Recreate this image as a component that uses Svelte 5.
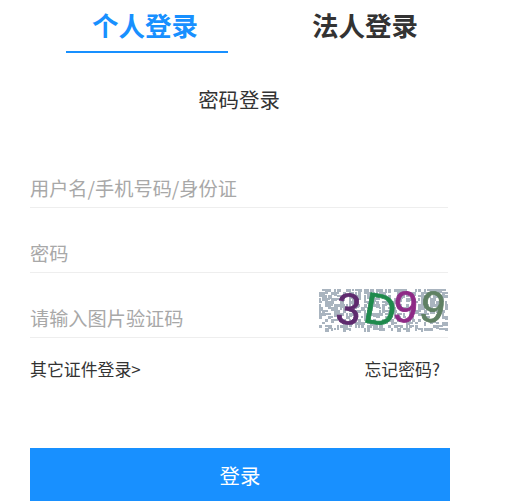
<script>
	let account = $state("");
	let password = $state("");
	let code = $state("");
	let active = $state("person");

	const tabs = [
		{ id: "person", label: "个人登录" },
		{ id: "company", label: "法人登录" },
	];

	const digits = [
		{ ch: "3", x: 17, y: 35, color: "#5e2a6e", rotate: 6 },
		{ ch: "D", x: 45, y: 35, color: "#1f8a4c", rotate: 10 },
		{ ch: "9", x: 74, y: 33, color: "#8e2a86", rotate: 6 },
		{ ch: "9", x: 101, y: 33, color: "#5f8063", rotate: 10 },
	];

	// speckled background of the captcha, same every load
	let seed = 11;
	function rand() {
		seed = (seed * 16807) % 2147483647;
		return seed / 2147483647;
	}
	const noise = [];
	for (let y = 0; y < 42; y += 3) {
		for (let x = 0; x < 129; x += 3) {
			if (rand() > 0.36) {
				noise.push({
					x,
					y,
					w: Math.min(2 + Math.round(rand() * 2), 129 - x),
					h: Math.min(2 + Math.round(rand() * 2), 43 - y),
				});
			}
		}
	}
</script>

<div class="login">
	<nav class="tabs">
		{#each tabs as tab}
			<button class="tab" class:active={active === tab.id} onclick={() => (active = tab.id)}>
				{tab.label}
			</button>
		{/each}
	</nav>

	<h2 class="title">密码登录</h2>

	<form class="form" onsubmit={(e) => e.preventDefault()}>
		<div class="field">
			<input bind:value={account} placeholder="用户名/手机号码/身份证" />
		</div>
		<div class="field">
			<input type="password" bind:value={password} placeholder="密码" />
		</div>
		<div class="field">
			<input bind:value={code} placeholder="请输入图片验证码" />
			<svg class="captcha" width="129" height="43" viewBox="0 0 129 43">
				<rect width="129" height="43" fill="#fff" />
				{#each noise as n}
					<rect x={n.x} y={n.y} width={n.w} height={n.h} fill="#a9b4bf" />
				{/each}
				{#each digits as d}
					<text
						x={d.x}
						y={d.y}
						fill={d.color}
						stroke={d.color}
						transform="rotate({d.rotate} {d.x + 12} {d.y - 12})"
						class="digit">{d.ch}</text
					>
				{/each}
			</svg>
		</div>

		<div class="links">
			<a href="#other">其它证件登录&gt;</a>
			<a href="#forgot" class="forgot">忘记密码?</a>
		</div>

		<button class="submit" type="submit">登录</button>
	</form>
</div>

<style>
	:global(body) {
		background: #fff;
		overflow: hidden;
	}

	.login {
		width: 505px;
		height: 502px;
		box-sizing: border-box;
		padding-left: 30px;
		font-family: "Noto Sans CJK SC", "Liberation Sans", sans-serif;
		color: #333;
	}

	.tabs {
		display: flex;
		gap: 58px;
		margin-left: 36px;
	}

	.tab {
		width: 162px;
		height: 53px;
		padding: 0 4px 2px 0;
		border: 0;
		border-bottom: 2px solid transparent;
		background: none;
		font: inherit;
		font-size: 26.5px;
		line-height: 49px;
		font-weight: 700;
		color: #333;
	}

	.tab.active {
		color: #1890ff;
		border-bottom-color: #1890ff;
	}

	.title {
		margin: 31px 0 0;
		width: 418px;
		font-size: 20.4px;
		line-height: 30px;
		font-weight: 400;
		text-align: center;
	}

	.form {
		display: flex;
		flex-direction: column;
		margin-top: 30px;
	}

	.field {
		display: flex;
		align-items: flex-end;
		width: 418px;
		height: 64px;
		box-sizing: border-box;
		border-bottom: 1px solid #eee;
		margin-bottom: 1px;
	}

	.field input {
		flex: 1;
		min-width: 0;
		height: 36px;
		padding: 0 0 1px;
		border: 0;
		outline: 0;
		background: none;
		font: inherit;
		font-size: 19.2px;
		color: #333;
	}

	.field input::placeholder {
		color: #a8a8a8;
		opacity: 1;
	}

	.captcha {
		display: block;
		flex: none;
		margin-bottom: 5px;
		overflow: visible;
		filter: blur(0.5px);
	}

	.digit {
		font-family: "Liberation Sans", sans-serif;
		font-size: 44px;
		stroke-width: 0.8px;
	}

	.links {
		display: flex;
		justify-content: space-between;
		width: 410px;
		margin-top: 17px;
		font-size: 16.9px;
		line-height: 26px;
	}

	.links a {
		color: #333;
		text-decoration: none;
	}

	.submit {
		width: 420px;
		height: 53px;
		margin-top: 66px;
		padding: 0;
		border: 0;
		background: #1890ff;
		color: #fff;
		font: inherit;
		font-size: 20.4px;
	}
</style>
